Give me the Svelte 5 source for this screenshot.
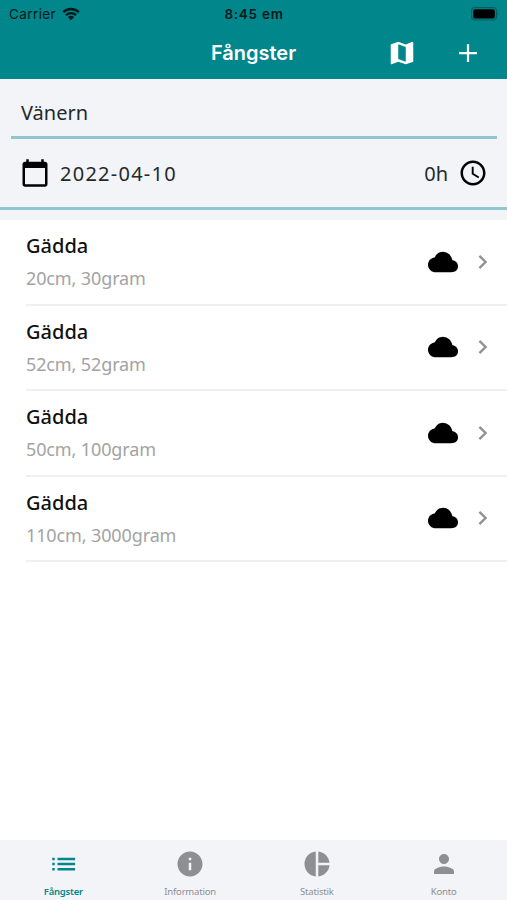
<script>
	let place = 'Vänern';
	let date = '2022-04-10';
	let hours = 0;

	const catches = [
		{ id: 1, species: 'Gädda', length: 20, weight: 30 },
		{ id: 2, species: 'Gädda', length: 52, weight: 52 },
		{ id: 3, species: 'Gädda', length: 50, weight: 100 },
		{ id: 4, species: 'Gädda', length: 110, weight: 3000 }
	];

	const tabs = [
		{
			name: 'Fångster',
			icon: 'M3.4 6.9h2v2h-2zM3.4 11h2v2h-2zM3.4 15.1h2v2h-2zM7.6 6.9h14v2h-14zM7.6 11h14v2h-14zM7.6 15.1h14v2h-14z'
		},
		{
			name: 'Information',
			icon: 'M12 2C6.48 2 2 6.48 2 12s4.48 10 10 10 10-4.48 10-10S17.52 2 12 2zm1 15h-2v-6h2v6zm0-8h-2V7h2v2z'
		},
		{
			name: 'Statistik',
			icon: 'M11 2v20c-5.07-.5-9-4.79-9-10s3.93-9.5 9-10zm2.03 0v8.99H22c-.47-4.74-4.24-8.52-8.97-8.99zm0 11.01V22c4.74-.47 8.5-4.25 8.97-8.99h-8.97z'
		},
		{
			name: 'Konto',
			icon: 'M12 12c2.21 0 4-1.79 4-4s-1.79-4-4-4-4 1.79-4 4 1.79 4 4 4zm0 2c-2.67 0-8 1.34-8 4v2h16v-2c0-2.66-5.33-4-8-4z'
		}
	];

	let active = 'Fångster';
</script>

<div class="app">
	<header>
		<div class="status">
			<div class="carrier">
				<span>Carrier</span>
				<svg width="18" height="14" viewBox="0 0 18 14">
					<path d="M1.2 5.1a11.2 11.2 0 0 1 15.6 0M4 8.1a7.2 7.2 0 0 1 10 0" />
					<path class="solid" d="M5.9 10.1a4.6 4.6 0 0 1 6.2 0L9 13.3z" />
				</svg>
			</div>
			<span class="time">8:45 em</span>
			<div class="battery">
				<svg width="28" height="14" viewBox="0 0 28 14">
					<rect class="shell" x=".6" y=".6" width="24.8" height="12.4" rx="3.4" />
					<rect x="2.2" y="2.2" width="21.6" height="9.2" rx="2" />
					<path class="tip" d="M26.4 4.8q1.5 2 0 4z" />
				</svg>
			</div>
		</div>
		<div class="nav">
			<h1>Fångster</h1>
			<div class="actions">
				<button aria-label="Karta">
					<svg width="30" height="30" viewBox="0 0 24 24">
						<path d="M20.5 3l-.16.03L15 5.1 9 3 3.36 4.9c-.21.07-.36.25-.36.48V20.5c0 .28.22.5.5.5l.16-.03L9 18.9l6 2.1 5.64-1.9c.21-.07.36-.25.36-.48V3.5c0-.28-.22-.5-.5-.5zM15 19l-6-2.11V5l6 2.11V19z" />
					</svg>
				</button>
				<button aria-label="Lägg till">
					<svg width="30" height="30" viewBox="0 0 24 24">
						<path d="M19.1 12.9h-6.2v6.2h-1.8v-6.2H4.9v-1.8h6.2V4.9h1.8v6.2h6.2z" />
					</svg>
				</button>
			</div>
		</div>
	</header>

	<section class="filter">
		<div class="place"><span>{place}</span></div>
		<div class="when">
			<svg width="30" height="30" viewBox="0 0 24 24">
				<path d="M20 3h-1V1h-2v2H7V1H5v2H4c-1.1 0-2 .9-2 2v16c0 1.1.9 2 2 2h16c1.1 0 2-.9 2-2V5c0-1.1-.9-2-2-2zm0 18H4V8h16v13z" />
			</svg>
			<span class="date">{date}</span>
			<span class="hours">{hours}h</span>
			<svg width="30" height="30" viewBox="0 0 24 24">
				<path d="M11.99 2C6.47 2 2 6.48 2 12s4.47 10 9.99 10C17.52 22 22 17.52 22 12S17.52 2 11.99 2zM12 20c-4.42 0-8-3.58-8-8s3.58-8 8-8 8 3.58 8 8-3.58 8-8 8zm.5-13H11v6l5.25 3.15.75-1.23-4.5-2.67z" />
			</svg>
		</div>
	</section>

	<ul>
		{#each catches as item (item.id)}
			<li>
				<div class="info">
					<h2>{item.species}</h2>
					<p>{item.length}cm, {item.weight}gram</p>
				</div>
				<svg class="cloud" width="30" height="30" viewBox="0 0 512 512">
					<path d="M396 432H136c-36.44 0-70.36-12.57-95.51-35.41C14.38 372.88 0 340 0 304c0-36.58 13.39-68.12 38.72-91.22 18.11-16.53 42.22-28.25 69.18-33.87a16 16 0 0011.37-9.15 156.24 156.24 0 0142.05-56.64C187.76 91.69 220.5 80 256 80a153.57 153.57 0 01107.14 42.9c24.73 23.81 41.5 55.28 49.18 92a16 16 0 0012.12 12.39C470 237.42 512 270.43 512 328c0 33.39-12.24 60.78-35.41 79.23C456.23 423.43 428.37 432 396 432z" />
				</svg>
				<svg class="chevron" width="10" height="16" viewBox="0 0 10 16">
					<path d="M1.4 1.8 7.6 8l-6.2 6.2" />
				</svg>
			</li>
		{/each}
	</ul>

	<footer>
		{#each tabs as tab (tab.name)}
			<button class="tab" class:active={tab.name === active} on:click={() => (active = tab.name)}>
				<svg width="30" height="30" viewBox="0 0 24 24"><path d={tab.icon} /></svg>
				<span>{tab.name}</span>
			</button>
		{/each}
	</footer>
</div>

<style>
	.app {
		display: flex;
		flex-direction: column;
		height: 900px;
		overflow: hidden;
		background: #fff;
		color: #25282b;
		font-family: "Noto Sans", sans-serif;
	}

	svg {
		display: block;
		flex: none;
	}

	button {
		padding: 0;
		border: none;
		background: none;
		font: inherit;
		color: inherit;
	}

	header {
		height: 79px;
		flex: none;
		background: #00868b;
		font-family: Inter, sans-serif;
	}

	.status {
		display: grid;
		grid-template-columns: 1fr auto 1fr;
		align-items: center;
		height: 27px;
		padding: 0 8px 0 9px;
		color: #05191a;
		font-size: 13.5px;
	}

	.carrier {
		display: flex;
		align-items: center;
		gap: 6px;
		letter-spacing: 0.4px;
	}

	.carrier path {
		fill: none;
		stroke: #05191a;
		stroke-width: 2.4;
	}

	.carrier .solid {
		fill: #05191a;
		stroke: none;
	}

	.time {
		font-weight: 600;
		letter-spacing: 0.75px;
	}

	.battery {
		display: flex;
		justify-content: flex-end;
	}

	.battery .shell {
		fill: none;
		stroke: #045f63;
		stroke-width: 1.2;
	}

	.battery .tip {
		fill: #045f63;
	}

	.nav {
		display: grid;
		grid-template-columns: 1fr auto 1fr;
		align-items: center;
		height: 51px;
		color: #fff;
	}

	h1 {
		grid-column: 2;
		margin: 0;
		font-size: 20px;
		font-weight: 600;
	}

	.actions {
		display: flex;
		justify-content: flex-end;
		gap: 36px;
		padding-right: 24px;
	}

	.actions path {
		fill: #fff;
	}

	.filter {
		height: 141px;
		flex: none;
		box-sizing: border-box;
		border-bottom: 10px solid #f2f4f8;
		background: #f2f4f8;
		font-size: 20px;
	}

	.place {
		display: flex;
		align-items: center;
		height: 60px;
		margin: 0 10px 0 11px;
		padding: 10px 0 0 10px;
		box-sizing: border-box;
		border-bottom: 3px solid #90c6cc;
	}

	.when {
		display: flex;
		align-items: center;
		height: 71px;
		padding: 0 19px 0 20px;
		box-sizing: border-box;
		border-bottom: 3px solid #90c6cc;
	}

	.date {
		margin-left: 10px;
		letter-spacing: 1.25px;
	}

	.hours {
		margin-left: auto;
		margin-right: 10px;
	}

	ul {
		flex: 1;
		margin: 0;
		padding: 0 0 0 26px;
		list-style: none;
	}

	li {
		display: flex;
		align-items: center;
		height: 85.5px;
		padding-right: 19px;
		box-sizing: border-box;
		border-bottom: 2px solid #f0f0f1;
	}

	.info {
		flex: 1;
	}

	h2 {
		margin: 0;
		color: #111;
		font-size: 20px;
		font-weight: 500;
		line-height: 33px;
	}

	p {
		margin: 0;
		color: #a3a3a3;
		font-size: 18px;
		letter-spacing: -0.12px;
		line-height: 32px;
	}

	.chevron {
		margin-left: 20px;
	}

	.chevron path {
		fill: none;
		stroke: #929292;
		stroke-width: 2.4;
	}

	footer {
		display: grid;
		grid-template-columns: repeat(4, 1fr);
		height: 60px;
		flex: none;
		background: #f2f4f8;
	}

	.tab {
		display: flex;
		flex-direction: column;
		align-items: center;
		padding-top: 9px;
		color: #8e8e93;
		font-size: 9.5px;
		letter-spacing: -0.2px;
		line-height: 12px;
	}

	.tab svg {
		margin-bottom: 7px;
		fill: currentColor;
	}

	.active {
		color: #00868b;
		font-weight: 600;
	}
</style>
